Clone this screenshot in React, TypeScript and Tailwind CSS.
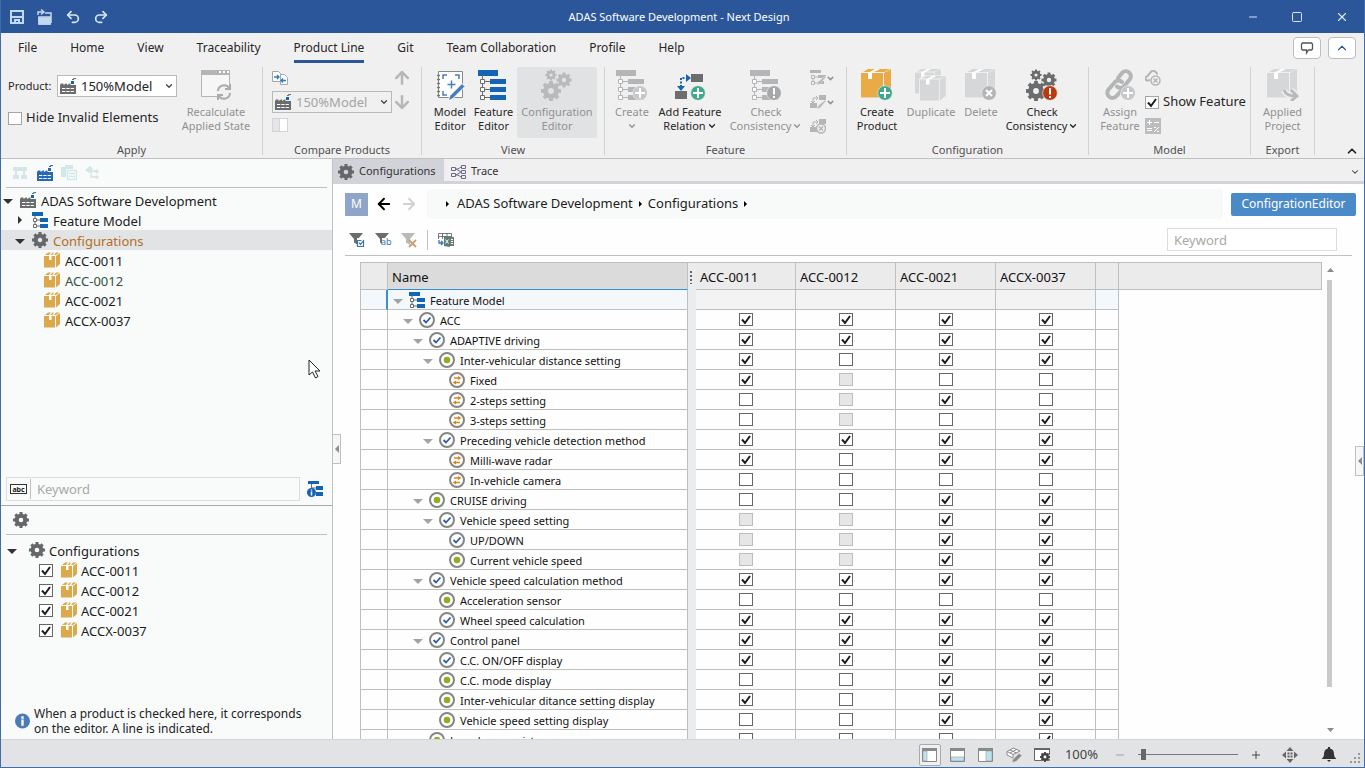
import type { ReactNode } from 'react';
import clsx from 'clsx';
import {
  ArrowDown, ArrowLeft, ArrowRight, ArrowUp, ChevronDown, ChevronUp, Minus, Plus, Redo2, Square, Undo2, X,
} from 'lucide-react';

const BLUE = '#1464b4';
const GRAY = '#b4b5b6';
const DARK = '#6b6c6e';

type State = 'on' | 'off' | 'na';
type Kind = 'model' | 'check' | 'dot' | 'swap';

/* ---------- icons ---------- */

function Factory({ color = DARK, flag = BLUE }: { color?: string; flag?: string }) {
  return (
    <svg width="16" height="16" viewBox="0 0 16 16" className="shrink-0">
      <path d="M0 16V7l1-1.500h2.500V7L6 5.500h1V7l2.500-1.500h1V7H16v9z" fill={color} />
      <path d="M2 10.500h12M2 13.500h12" stroke="#fff" strokeDasharray="3.300 1" />
      <path d="M11 3h3v3h-3z" fill={flag} />
      <path d="M12 1.500h1.500l.5-1h2" stroke={color} fill="none" strokeWidth="1.2" />
    </svg>
  );
}

function FeatureIcon() {
  return (
    <svg width="16" height="16" viewBox="0 0 16 16" className="shrink-0">
      <path d="M0 0h11v4H0zM8 6h8v4H8zM8 12h8v4H8z" fill={BLUE} />
      <path d="M3 4v9M3 8h5M3 14h5" stroke={DARK} />
      <path d="M1.500 6.500h3v3h-3zM1.500 12.500h3v3h-3z" fill="#fff" stroke={DARK} />
    </svg>
  );
}

function FeatureTree({ color = BLUE, line = DARK, children }: { color?: string; line?: string; children?: ReactNode }) {
  return (
    <svg width="32" height="32" viewBox="0 0 32 32">
      <path d="M0 1h20v6H0zM12 10h16v5H12zM12 18h16v5H12zM12 26h16v5H12z" fill={color} />
      <path d="M4.500 6v22M5 12.500h7M5 20.500h7M5 28.500h7" stroke={line} />
      <path d="M2.500 10.500h4v4h-4zM2.500 18.500h4v4h-4zM2.500 26.500h4v4h-4z" fill="#fff" stroke={line} />
      {children}
    </svg>
  );
}

// eight teeth round a ring, drawn about its own centre
function GearShape({ x, y, r, color }: { x: number; y: number; r: number; color: string }) {
  return (
    <g transform={`translate(${x} ${y})`}>
      <circle r={r * 0.54} fill="none" stroke={color} strokeWidth={r * 0.5} />
      {[0, 45, 90, 135, 180, 225, 270, 315].map((a) => (
        <rect key={a} x={-r * 0.19} y={-r} width={r * 0.38} height={r * 0.4} fill={color} transform={`rotate(${a})`} />
      ))}
    </g>
  );
}

function Gear() {
  return (
    <svg width="16" height="16" viewBox="0 0 16 16" className="shrink-0">
      <GearShape x={8} y={8} r={8} color="#66676a" />
    </svg>
  );
}

function Gears({ color, children }: { color: string; children?: ReactNode }) {
  return (
    <svg width="32" height="32" viewBox="0 0 32 32">
      <GearShape x={10} y={6} r={5.5} color={color} />
      <GearShape x={23} y={11} r={7.5} color={color} />
      <GearShape x={10} y={22} r={10} color={color} />
      {children}
    </svg>
  );
}

function BoxIcon() {
  return (
    <svg width="16" height="16" viewBox="0 0 16 16" className="shrink-0">
      <path d="M0 4h11v11.500H0zM12 4l4-3v11l-4 3.500zM1 3l3-2.500h3L5 3zM6.500 3l2-2.500H10L8.500 3zM10 3l2-2.500h3.500L12 3z" fill="#dba94c" />
      <path d="M5 4h2.500v4H5z" fill="#fff" />
    </svg>
  );
}

function BoxShape({ color }: { color: string }) {
  return (
    <>
      <path d="M0 4h22v24.500H0zM23 4l7-4v23l-7 5.500zM2 3l5-3h22l-5.500 3z" fill={color} />
      <path d="M7 4l7-4h5l-8 4v6H7z" fill="#fff" />
    </>
  );
}

function BigBox({ color, children }: { color: string; children?: ReactNode }) {
  return (
    <svg width="32" height="32" viewBox="0 0 32 32">
      <BoxShape color={color} />
      {children}
    </svg>
  );
}

function Badge({ x, y, color, kind }: { x: number; y: number; color: string; kind: 'plus' | 'x' | 'alert' }) {
  return (
    <g transform={`translate(${x} ${y})`}>
      <circle r="7.300" fill={color} stroke="#f0f0f0" strokeWidth=".600" />
      {kind === 'plus' && <path d="M-5 0H5M0-5V5" stroke="#fff" strokeWidth="2" />}
      {kind === 'x' && <path d="M-3-3L3 3M3-3L-3 3" stroke="#fff" strokeWidth="2" />}
      {kind === 'alert' && <path d="M0-5V1.500M0 3V5" stroke="#fff" strokeWidth="2" />}
    </g>
  );
}

function NodeIcon({ kind }: { kind: Kind }) {
  if (kind === 'model') return <FeatureIcon />;
  return (
    <svg width="16" height="16" viewBox="0 0 16 16" className="shrink-0">
      <circle cx="8" cy="8" r="7" fill="#fff" stroke="#858585" strokeWidth="2" />
      {kind === 'check' && <path d="M4.500 8l2.500 2.500 4.500-5" fill="none" stroke="#2f5ca8" strokeWidth="1.800" />}
      {kind === 'dot' && <circle cx="8" cy="8" r="3.300" fill="#8fae22" />}
      {kind === 'swap' && (
        <>
          <path d="M5 6h5M6 10.500h5" stroke="#d9861a" strokeWidth="1.400" />
          <path d="M9 4L12.500 6 9 8zM7 8.500L3.500 10.500 7 12.500z" fill="#d9861a" />
        </>
      )}
    </svg>
  );
}

function Caret({ open = true, color = '#333' }: { open?: boolean; color?: string }) {
  return (
    <svg width="10" height="10" viewBox="0 0 10 10" className="shrink-0">
      <path d={open ? 'M0 4h10L5 9z' : 'M3 1l4 4-4 4z'} fill={color} />
    </svg>
  );
}

function Funnel({ color = DARK, children }: { color?: string; children: ReactNode }) {
  return (
    <svg width="16" height="16" viewBox="0 0 16 16" className="overflow-visible">
      <path d="M0 1h14L9 7v6l-4-2.500V7z" fill={color} />
      {children}
    </svg>
  );
}

function Relation({ badge }: { badge: 'tree' | 'pen' | 'x' }) {
  return (
    <svg width="16" height="16" viewBox="0 0 16 16" className="shrink-0">
      {badge === 'tree' ? (
        <>
          <path d="M0 0h11v3H0zM8 5h8v3H8zM8 11h6v3H8z" fill={GRAY} />
          <path d="M1.500 5.500h3v3h-3zM1.500 11.500h3v3h-3zM3 8v4M5 7h3M5 13h3" fill="none" stroke={GRAY} />
        </>
      ) : (
        <>
          <path d="M9 1h7v5H9zM0 9h7v5H0z" fill={GRAY} />
          <path d="M3 9V4h5M1 7l2 2 2-2M6 2l2 2-2 2" fill="none" stroke={GRAY} />
        </>
      )}
      {badge === 'x' ? (
        <>
          <circle cx="11" cy="10.500" r="4.500" fill="#f0f0f0" stroke={GRAY} strokeWidth="1.500" />
          <path d="M9 8.500l4 4M13 8.500l-4 4" stroke={GRAY} strokeWidth="1.500" />
        </>
      ) : (
        <path d="M7 15l1-3 7-6 1 1-6 7z" fill={GRAY} stroke="#f0f0f0" strokeWidth=".500" />
      )}
    </svg>
  );
}

function LinkIcon() {
  return (
    <svg width="32" height="32" viewBox="0 0 32 32">
      <g fill="none" stroke={GRAY} strokeWidth="4" strokeLinecap="round">
        <path d="M14 9l4.500-5.500a5 5 0 0 1 7.500 6.500L20 17.500a5 5 0 0 1-7 0" />
        <path d="M17 22l-4.500 5a5 5 0 0 1-8-6.500l6.500-7.500a5 5 0 0 1 7 0" />
      </g>
      <Badge x={24} y={24} color="#c6c7c8" kind="plus" />
    </svg>
  );
}

/* ---------- controls ---------- */

function Check({ state, label, light }: { state: State; label: string; light?: boolean }) {
  return (
    <span className="inline-grid shrink-0">
      <input
        type="checkbox"
        aria-label={label}
        defaultChecked={state === 'on'}
        disabled={state === 'na'}
        className={clsx(
          'peer col-start-1 row-start-1 h-[13px] w-[14px] appearance-none border bg-white disabled:border-[#bdbdbd] disabled:bg-[#e6e6e6]',
          light ? 'border-[#a5a5a5]' : 'border-[#666]',
        )}
      />
      <svg viewBox="0 0 14 13" className="pointer-events-none invisible col-start-1 row-start-1 h-[13px] w-[14px] peer-checked:visible">
        <path d="M3 6.500l3 3.500 5-7" fill="none" stroke="#1c1c1c" strokeWidth="2" />
      </svg>
    </span>
  );
}

function ProductSelect({ disabled }: { disabled?: boolean }) {
  return (
    <span className="relative flex items-center">
      <span className="pointer-events-none absolute left-[3px]"><Factory /></span>
      <select
        id={disabled ? 'compare' : 'product'}
        aria-label="Product"
        disabled={disabled}
        className="h-[22px] w-[120px] appearance-none border border-[#b9babc] bg-white pl-[23px] text-[13px] leading-5 text-[#222] disabled:bg-[#f0f0f0] disabled:text-[#a4a4a4] disabled:opacity-100"
      >
        <option>150%Model</option>
      </select>
      <ChevronDown size={10} strokeWidth={3} className="pointer-events-none absolute right-[3px] text-[#444]" />
    </span>
  );
}

function BigButton({ icon, lines, width, disabled, active, menu }: {
  icon: ReactNode; lines: string[]; width: string; disabled?: boolean; active?: boolean; menu?: boolean;
}) {
  return (
    <button
      type="button"
      disabled={disabled}
      className={clsx(
        'flex h-[71px] shrink-0 flex-col items-center rounded-xs pt-0.5 text-[11px] leading-[14px] whitespace-nowrap text-[#262626] disabled:text-[#919191]',
        width,
        active && 'bg-[#e1e2e3]',
      )}
    >
      <span className="mb-1 h-8">{icon}</span>
      {lines.map((line, i) => (
        <span key={i} className="flex h-[14px] items-center gap-px">
          {line}
          {menu && i === lines.length - 1 && <ChevronDown size={10} strokeWidth={3} />}
        </span>
      ))}
    </button>
  );
}

function Group({ label, width, children }: { label: string; width: string; children: ReactNode }) {
  return (
    <section className={clsx('flex h-[88px] shrink-0 flex-col border-r border-[#d0d1d3]', width)}>
      <div className="flex">{children}</div>
      <h2 className="mt-auto text-center text-[11px] leading-[10px] text-[#505050]">{label}</h2>
    </section>
  );
}

/* ---------- ribbon ---------- */

const tabs = ['File', 'Home', 'View', 'Traceability', 'Product Line', 'Git', 'Team Collaboration', 'Profile', 'Help'];

function TitleBar() {
  return (
    <header className="flex h-[33px] shrink-0 items-center bg-[#2b579a] pt-px text-[#dbe7f5]">
      <div className="flex flex-1 items-center gap-3 pl-2">
        <button type="button" aria-label="Save">
          <svg width="16" height="16" viewBox="0 0 16 16" fill="none" stroke="#c3d9ef" strokeWidth="2">
            <path d="M2 2h12v12H2zM2 8h12M6 14v-3h4v3" />
          </svg>
        </button>
        <button type="button" aria-label="Open">
          <svg width="16" height="16" viewBox="0 0 16 16" fill="none" stroke="#c3d9ef" strokeWidth="1.500">
            <path d="M2 15V8h11v7zM8 4h6v10M1 6V3h5M4 .500L7 3 4 5.500" />
            <path d="M2 9h11v6H2z" fill="#c3d9ef" />
          </svg>
        </button>
        <button type="button" aria-label="Undo"><Undo2 size={16} strokeWidth={2.5} /></button>
        <button type="button" aria-label="Redo"><Redo2 size={16} strokeWidth={2.5} /></button>
      </div>
      <h1 className="text-[11px] text-white">ADAS Software Development - Next Design</h1>
      <div className="flex flex-1 items-center justify-end gap-8 pr-[15px]">
        <button type="button" aria-label="Minimize"><Minus size={12} strokeWidth={2} /></button>
        <button type="button" aria-label="Maximize"><Square size={12} strokeWidth={2} /></button>
        <button type="button" aria-label="Close"><X size={14} strokeWidth={2} /></button>
      </div>
    </header>
  );
}

function Tabs() {
  return (
    <nav className="flex h-[34px] shrink-0 items-start bg-[#f0f0f0] pl-[17px] text-xs text-[#262626]">
      <div className="flex gap-[33px]">
        {tabs.map((tab) => (
          <a
            key={tab}
            href="#"
            className={clsx('flex h-[30px] items-center border-b-[3px] pt-[3px]', tab === 'Product Line' ? 'border-[#2b579a]' : 'border-transparent')}
          >
            {tab}
          </a>
        ))}
      </div>
      <div className="ml-auto flex gap-[7px] pt-1 pr-2">
        <button type="button" aria-label="Feedback" className="grid h-[22px] w-7 place-items-center rounded-sm border border-[#bcbdbf] bg-white">
          <svg width="14" height="14" viewBox="0 0 14 14" fill="none" stroke="#555" strokeWidth="1.300">
            <path d="M2.500 2h9l1 1v5l-1 1H8.500l-2 3v-3h-4l-1-1V3z" />
          </svg>
        </button>
        <button type="button" aria-label="Collapse" className="grid h-[22px] w-7 place-items-center rounded-sm border border-[#bcbdbf] bg-white text-[#2b579a]">
          <ChevronUp size={14} />
        </button>
      </div>
    </nav>
  );
}

function Ribbon() {
  return (
    <div className="flex h-[92px] shrink-0 items-start overflow-hidden border-b border-[#bfc0c2] bg-[#f0f0f0]">
      <Group label="Apply" width="w-[262px]">
        <div className="flex flex-col gap-[10px] pt-2 pl-[7px]">
          <div className="flex items-center gap-1">
            <label htmlFor="product" className="w-[45px] text-[11px] text-[#262626]">Product:</label>
            <ProductSelect />
          </div>
          <label className="flex h-[22px] items-center gap-1 text-[13px] text-[#262626]">
            <Check state="off" label="Hide Invalid Elements" light />
            Hide Invalid Elements
          </label>
        </div>
        <BigButton
          width="w-[78px]"
          disabled
          lines={['Recalculate', 'Applied State']}
          icon={
            <svg width="32" height="32" viewBox="0 0 32 32">
              <path d="M1.500 2.500h28v25h-28z" fill="#f6f6f6" stroke={GRAY} />
              <path d="M1 1h29v5H1z" fill={GRAY} />
              <path d="M19 3h2M23 3h2M27 3h2" stroke="#fff" strokeWidth="2" />
              <circle cx="24" cy="23" r="8" fill="#f0f0f0" />
              <path d="M18 22a6 6 0 0 1 11-3M30 24a6 6 0 0 1-11 3M30 15v5h-5M18 31v-5h5" fill="none" stroke="#aaabac" strokeWidth="2" />
            </svg>
          }
        />
      </Group>

      <Group label="Compare Products" width="w-[159px]">
        <div className="flex flex-col gap-[5px] pt-[3px] pl-[9px]">
          <button type="button" aria-label="Compare" className="w-4">
            <svg width="16" height="16" viewBox="0 0 16 16" fill="#fff" stroke="#a5a6a8">
              <path d="M.500 1.500h6l2 2v8h-8z" />
              <path d="M8.500 4.500h4l3 3v7h-7z" />
              <path d="M2 7h5M5 5l2 2-2 2M14 10.500H9M11 8.500l-2 2 2 2" fill="none" stroke="#2b7cc3" strokeWidth="1.300" />
            </svg>
          </button>
          <ProductSelect disabled />
          <button type="button" disabled aria-label="Split view" className="flex h-[14px] w-4 border border-[#d3d4d6] bg-white">
            <span className="h-full w-[7px] border-r border-[#d3d4d6] bg-[#e4e5e6]" />
          </button>
        </div>
        <div className="flex flex-col items-center gap-1 pt-px text-[#b6b7b8]">
          <ArrowUp size={20} strokeWidth={3} />
          <ArrowDown size={20} strokeWidth={3} />
        </div>
      </Group>

      <Group label="View" width="w-[183px]">
        <div className="flex pl-2">
          <BigButton
            width="w-10"
            lines={['Model', 'Editor']}
            icon={
              <svg width="32" height="32" viewBox="0 0 32 32" fill="none">
                <path d="M4.500 2.500h24v26h-24z" fill="#fff" stroke="#888" />
                <path d="M3 6.500h3M3 10.500h3M3 14.500h3M3 18.500h3M3 22.500h3M3 26.500h3" stroke="#777" strokeWidth="1.500" />
                <path d="M9 10V6h4M21 6h4v4M9 22v4h4M17.500 11.500v8M13.500 15.500h8" stroke="#4a7eb8" strokeWidth="1.500" />
                <path d="M14 32l2-5.500L28 14.500l3 3L19 29.500z" fill="#4a7eb8" stroke="#fff" />
              </svg>
            }
          />
          <BigButton width="w-[47px]" lines={['Feature', 'Editor']} icon={<FeatureTree />} />
          <BigButton width="w-20" disabled active lines={['Configuration', 'Editor']} icon={<Gears color="#b9babb" />} />
        </div>
      </Group>

      <Group label="Feature" width="w-[242px]">
        <div className="flex pl-1">
          <BigButton width="w-[46px]" disabled menu lines={['Create', '']} icon={<FeatureTree color={GRAY} line={GRAY}><Badge x={24} y={24} color="#c6c7c8" kind="plus" /></FeatureTree>} />
          <BigButton
            width="w-[70px]"
            menu
            lines={['Add Feature', 'Relation']}
            icon={
              <svg width="32" height="32" viewBox="0 0 32 32">
                <path d="M17 5h12v8H17zM1 22h12v8H1z" fill="#6d6d6d" />
                <path d="M7 18V9h6" fill="none" stroke={BLUE} strokeWidth="2" strokeDasharray="2 1.500" />
                <path d="M3 17l4 5 4-5zM12 5l5 4-5 4z" fill={BLUE} />
                <Badge x={24} y={24} color="#3fa98c" kind="plus" />
              </svg>
            }
          />
          <BigButton width="w-[82px]" disabled menu lines={['Check', 'Consistency']} icon={<FeatureTree color={GRAY} line={GRAY}><Badge x={24} y={24} color="#a6a7a8" kind="alert" /></FeatureTree>} />
        </div>
        <div className="flex flex-col gap-2 pt-[3px] pl-[3px] text-[#929394]">
          <button type="button" disabled aria-label="Edit features" className="flex items-center"><Relation badge="tree" /><ChevronDown size={9} strokeWidth={4} /></button>
          <button type="button" disabled aria-label="Edit relation" className="flex items-center"><Relation badge="pen" /><ChevronDown size={9} strokeWidth={4} /></button>
          <button type="button" disabled aria-label="Delete relation"><Relation badge="x" /></button>
        </div>
      </Group>

      <Group label="Configuration" width="w-[242px]">
        <div className="flex pl-1">
          <BigButton width="w-[52px]" lines={['Create', 'Product']} icon={<BigBox color="#e8ab45"><Badge x={24} y={24} color="#3fa98c" kind="plus" /></BigBox>} />
          <BigButton
            width="w-14"
            disabled
            lines={['Duplicate']}
            icon={
              <svg width="32" height="32" viewBox="0 0 32 32">
                <g transform="scale(.86)"><BoxShape color="#d6d7d8" /></g>
                <g transform="translate(5 7) scale(.86)"><path d="M-1 3L6-1h25v25l-7 6H-1z" fill="#f0f0f0" /><BoxShape color="#d6d7d8" /></g>
              </svg>
            }
          />
          <BigButton width="w-11" disabled lines={['Delete']} icon={<BigBox color="#d6d7d8"><Badge x={24} y={24} color="#b4b5b6" kind="x" /></BigBox>} />
          <BigButton width="w-[78px]" menu lines={['Check', 'Consistency']} icon={<Gears color="#6b6c6e"><Badge x={24} y={24} color="#b93a0e" kind="alert" /></Gears>} />
        </div>
      </Group>

      <Group label="Model" width="w-[162px]">
        <div className="flex pl-2">
          <BigButton width="w-[46px]" disabled lines={['Assign', 'Feature']} icon={<LinkIcon />} />
        </div>
        <div className="flex flex-col gap-2 pt-[3px] pl-0.5">
          <button type="button" disabled aria-label="Unassign" className="w-4">
            <svg width="16" height="16" viewBox="0 0 16 16" fill="none" stroke={GRAY} strokeWidth="2">
              <path d="M5 10l-2 .500a2 2 0 0 1-1-4L6 2a2.500 2.500 0 0 1 4-.500 3 3 0 0 1 2 3" />
              <circle cx="10.500" cy="10.500" r="4.500" strokeWidth="1.500" />
              <path d="M8.500 8.500l4 4M12.500 8.500l-4 4" strokeWidth="1.500" />
            </svg>
          </button>
          <label className="flex h-4 items-center gap-1 text-[13px] text-[#262626]">
            <Check state="on" label="Show Feature" light />
            Show Feature
          </label>
          <button type="button" disabled aria-label="Formula" className="w-4">
            <svg width="16" height="16" viewBox="0 0 16 16">
              <path d="M0 0h16v16H0z" fill="#bcbdbe" />
              <path d="M2 4.500h5M4.500 2v5M9 4.500h5M2 10.500h5M2 12.500h5M9 14l5-5M9 9.500h2M12 13.500h2" stroke="#fff" />
            </svg>
          </button>
        </div>
      </Group>

      <Group label="Export" width="w-16">
        <BigButton
          width="w-full"
          disabled
          lines={['Applied', 'Project']}
          icon={
            <BigBox color="#d6d7d8">
              <path d="M17 21c2 5 6 6 9 6M24 21l6 6-6 5" fill="none" stroke="#f0f0f0" strokeWidth="6" />
              <path d="M17 21c2 5 6 6 11 6M24 21l6 6-6 5" fill="none" stroke="#b9babb" strokeWidth="3" />
            </BigBox>
          }
        />
      </Group>
      <button type="button" aria-label="Collapse ribbon" className="mr-[5px] ml-auto self-end text-[#222]">
        <ChevronUp size={14} strokeWidth={3} />
      </button>
    </div>
  );
}

/* ---------- left side ---------- */

const products = ['ACC-0011', 'ACC-0012', 'ACC-0021', 'ACCX-0037'];

function TreeRow({ level, open, icon, label, selected, tone }: {
  level: 0 | 1 | 2; open?: boolean; icon: ReactNode; label: string; selected?: boolean; tone?: string;
}) {
  return (
    <li className={clsx('flex h-5 items-center', ['pl-0.5', 'pl-[14px]', 'pl-[26px]'][level], selected && 'bg-[#e2e3e5]', tone)}>
      <span className="flex w-[17px]">{open !== undefined && <Caret open={open} />}</span>
      {icon}
      <span className="pt-0.5 pl-[5px] leading-[18px]">{label}</span>
    </li>
  );
}

function SidePanel() {
  return (
    <aside className="relative flex w-[332px] shrink-0 flex-col border-r border-[#bfc0c2] bg-[#f9fbfb] text-[13px] text-[#1c1c1c]">
      <div className="mr-[5px] ml-[5px] flex h-[29px] items-center gap-2 border-b border-[#bfc0c2] pl-[7px]">
        <svg width="16" height="16" viewBox="0 0 16 16"><path d="M0 2h14v4H0zM0 10h6v4H0zM8 10h6v4H8zM2 6h2v4H2zM10 6h2v4h-2z" fill="#d3e6e8" /></svg>
        <Factory color="#2868b4" flag="#2868b4" />
        <svg width="16" height="16" viewBox="0 0 16 16"><path d="M0 2h4V0h8v4H5v8H0z" fill="#d3e6e8" /><path d="M6.500 5.500h9v9h-9zM8 8.500h6M8 11.500h6" fill="#f9fbfb" stroke="#d3e6e8" strokeWidth="1.500" /></svg>
        <svg width="16" height="16" viewBox="0 0 16 16"><path d="M0 5l5-4 3 3-4 4zM9 6l3-2 2 2-2 3zM9 12l3-2 2 2-2 2z" fill="#d3e6e8" /><path d="M6 5v7h4M6 6h5" fill="none" stroke="#d3e6e8" strokeWidth="1.500" /></svg>
      </div>
      <ul className="pt-0.5">
        <TreeRow level={0} open icon={<Factory />} label="ADAS Software Development" />
        <TreeRow level={1} open={false} icon={<FeatureIcon />} label="Feature Model" />
        <TreeRow level={1} open icon={<Gear />} label="Configurations" selected tone="text-[#b3701f]" />
        {products.map((name) => (
          <TreeRow key={name} level={2} icon={<BoxIcon />} label={name} tone={name === 'ACC-0012' ? 'text-[#33503f]' : undefined} />
        ))}
      </ul>

      <div className="mt-auto flex items-center gap-[7px] pb-1 pl-[5px]">
        <div className="flex h-6 w-[294px] items-center border border-[#dcdddf]">
          <button type="button" aria-label="Match mode" className="flex h-5 w-6 items-center justify-center border-r border-[#bfc0c2]">
            <span className="flex h-[10px] items-center border border-[#333] px-px text-[7px] leading-none font-bold">abc</span>
          </button>
          <input type="text" aria-label="Search tree" placeholder="Keyword" className="min-w-0 flex-1 bg-transparent px-1.5 pt-0.5 text-[13px] outline-none placeholder:text-[#a9a9a5]" />
        </div>
        <svg width="16" height="16" viewBox="0 0 16 16">
          <path d="M1 0h11v3H1zM9 5h7v4H9zM9 11h7v4H9z" fill={BLUE} />
          <path d="M4.500 3v4M5 7h4" stroke={DARK} />
          <circle cx="4.500" cy="11.500" r="4.500" fill={BLUE} />
          <path d="M4.500 8.500v1M4.500 10.500v4" stroke="#fff" strokeWidth="1.500" />
        </svg>
      </div>

      <section className="flex h-[234px] shrink-0 flex-col border-t border-[#a9aaac]">
        <div className="mx-[5px] flex h-[29px] items-center border-b border-[#bfc0c2] pl-[7px]"><Gear /></div>
        <ul className="pt-[5px]">
          <li className="flex h-5 items-center pl-[6px]">
            <Caret />
            <span className="pl-3"><Gear /></span>
            <span className="pt-0.5 pl-1 leading-[18px]">Configurations</span>
          </li>
          {products.map((name) => (
            <li key={name} className="flex h-5 items-center pl-[38px]">
              <Check state="on" label={name} />
              <span className="pl-2"><BoxIcon /></span>
              <span className="pt-0.5 pl-1 leading-[18px]">{name}</span>
            </li>
          ))}
        </ul>
        <p className="mt-auto flex items-center gap-1 pb-[3px] pl-[14px] text-xs leading-[15px] text-[#222]">
          <svg width="15" height="16" viewBox="0 0 16 16" className="shrink-0">
            <circle cx="8" cy="8" r="8" fill="#4a7db8" />
            <path d="M8 3v2.500M8 6.500V13" stroke="#fff" strokeWidth="2.500" />
          </svg>
          <span>When a product is checked here, it corresponds<br />on the editor. A line is indicated.</span>
        </p>
      </section>

      <button type="button" aria-label="Collapse panel" className="absolute top-[275px] -right-[9px] z-10 grid h-[30px] w-[9px] place-items-center border border-[#bfc0c2] bg-[#f5f6f6]">
        <svg width="4" height="8" viewBox="0 0 4 8"><path d="M4 0v8L0 4z" fill="#8b8c90" /></svg>
      </button>
      <svg width="13" height="20" viewBox="0 0 13 20" className="absolute top-[200px] left-[307px]">
        <path d="M1 1v15l3.500-3 3 6 2.500-1.500-3-5.500H12z" fill="#fff" stroke="#222" />
      </svg>
    </aside>
  );
}

/* ---------- editor ---------- */

// one letter per product column: x = checked, o = unchecked, - = not applicable
const rows: { name: string; level: number; kind: Kind; leaf?: boolean; cells: string }[] = [
  { name: 'Feature Model', level: 0, kind: 'model', cells: '' },
  { name: 'ACC', level: 1, kind: 'check', cells: 'xxxx' },
  { name: 'ADAPTIVE driving', level: 2, kind: 'check', cells: 'xxxx' },
  { name: 'Inter-vehicular distance setting', level: 3, kind: 'dot', cells: 'xoxx' },
  { name: 'Fixed', level: 4, kind: 'swap', leaf: true, cells: 'x-oo' },
  { name: '2-steps setting', level: 4, kind: 'swap', leaf: true, cells: 'o-xo' },
  { name: '3-steps setting', level: 4, kind: 'swap', leaf: true, cells: 'o-ox' },
  { name: 'Preceding vehicle detection method', level: 3, kind: 'check', cells: 'xxxx' },
  { name: 'Milli-wave radar', level: 4, kind: 'swap', leaf: true, cells: 'xoxx' },
  { name: 'In-vehicle camera', level: 4, kind: 'swap', leaf: true, cells: 'oooo' },
  { name: 'CRUISE driving', level: 2, kind: 'dot', cells: 'ooxx' },
  { name: 'Vehicle speed setting', level: 3, kind: 'check', cells: '--xx' },
  { name: 'UP/DOWN', level: 4, kind: 'check', leaf: true, cells: '--xx' },
  { name: 'Current vehicle speed', level: 4, kind: 'dot', leaf: true, cells: '--xx' },
  { name: 'Vehicle speed calculation method', level: 2, kind: 'check', cells: 'xxxx' },
  { name: 'Acceleration sensor', level: 3, kind: 'dot', leaf: true, cells: 'oooo' },
  { name: 'Wheel speed calculation', level: 3, kind: 'check', leaf: true, cells: 'xxxx' },
  { name: 'Control panel', level: 2, kind: 'check', cells: 'xxxx' },
  { name: 'C.C. ON/OFF display', level: 3, kind: 'check', leaf: true, cells: 'xxxx' },
  { name: 'C.C. mode display', level: 3, kind: 'dot', leaf: true, cells: 'ooxx' },
  { name: 'Inter-vehicular ditance setting display', level: 3, kind: 'dot', leaf: true, cells: 'xoxx' },
  { name: 'Vehicle speed setting display', level: 3, kind: 'dot', leaf: true, cells: 'ooxx' },
  { name: 'Lane keep assist', level: 2, kind: 'dot', leaf: true, cells: 'ooox' },
];

const indent = ['pl-[5px]', 'pl-[15px]', 'pl-[25px]', 'pl-[35px]', 'pl-[45px]'];
const states: Record<string, State> = { x: 'on', o: 'off', '-': 'na' };

function FeatureTable() {
  const th = 'h-7 border-t border-r border-b border-[#bfbfbf] bg-[#ebebeb] pt-[3px] pb-0 pl-1 text-left font-normal';
  const td = 'h-5 border-r border-b border-[#bfbfbf] p-0';
  return (
    <table className="w-full table-fixed border-separate border-spacing-0 text-[#111]">
      <colgroup>
        <col className="w-7" />
        <col className="w-[300px]" />
        <col className="w-2" />
        {products.map((p) => <col key={p} className="w-[100px]" />)}
        <col className="w-[23px]" />
        <col />
      </colgroup>
      <thead className="text-[13px]">
        <tr>
          <th className={clsx(th, 'border-l')} />
          <th className="h-7 border-t border-r border-b border-[#bfbfbf] border-b-[#3a8fd3] bg-[#dbdbdb] pt-[3px] pb-0 pl-1 text-left font-normal">Name</th>
          <th className="border-t border-[#bfbfbf] bg-[#ebecee] p-0">
            <svg width="8" height="16" viewBox="0 0 8 16"><path d="M3 2v13" stroke="#666" strokeWidth="2" strokeDasharray="2 2" /></svg>
          </th>
          {products.map((p) => <th key={p} className={th}>{p}</th>)}
          <th className={th} />
          <th className={th} />
        </tr>
      </thead>
      <tbody className="text-[11px]">
        {rows.map((row) => {
          const root = row.level === 0;
          return (
            <tr key={row.name}>
              <td className={clsx(td, 'border-l', root && 'border-r-2 border-r-[#3a8fd3] bg-[#f3f8fc]')} />
              <td className={clsx(td, root && 'bg-[#f3f8fc]')}>
                <div className={clsx('flex h-[19px] items-center pt-px whitespace-nowrap', indent[row.level])}>
                  <span className="flex w-4">{!row.leaf && <Caret color="#a3a3a3" />}</span>
                  <NodeIcon kind={row.kind} />
                  <span className="pt-px pl-[5px] leading-4">{row.name}</span>
                </div>
              </td>
              <td className="bg-[#ebecee] p-0" />
              {products.map((p, i) => (
                <td key={p} className={clsx(td, root && 'bg-[#f3f3f3]')}>
                  {!root && (
                    <div className="flex h-[19px] items-center justify-center pl-px">
                      <Check state={states[row.cells[i]]} label={`${row.name} ${p}`} />
                    </div>
                  )}
                </td>
              ))}
              <td className={clsx(td, root && 'bg-[#f3f8fc]')} />
            </tr>
          );
        })}
      </tbody>
    </table>
  );
}

function Editor() {
  return (
    <main className="relative flex min-w-0 flex-1 flex-col bg-[#fefefe]">
      <div className="flex h-[25px] shrink-0 items-stretch border-b-[3px] border-[#d2d3d8] bg-[#f0f0f0] text-[11px] text-[#333]">
        <button type="button" className="flex w-[111px] items-center gap-[5px] bg-[#d2d3d8] pt-[3px] pl-[5px]"><Gear />Configurations</button>
        <button type="button" className="flex items-center gap-1 pt-[3px] pl-[7px]">
          <svg width="16" height="16" viewBox="0 0 16 16" fill="none" stroke="#6d6a88">
            <path d="M.500 3.500h4v3h-4zM.500 9.500h4v3h-4zM10.500 1.500h4v3h-4zM10.500 6.500h4v3h-4zM10.500 11.500h4v3h-4zM5 5h2l3-2M5 5l5 3M5 11l5-3M5 11h2l3 2" />
          </svg>
          Trace
        </button>
        <ChevronDown size={10} strokeWidth={2.5} className="mt-2 mr-1 ml-auto" />
      </div>

      <div className="flex h-10 shrink-0 items-center pr-2 pl-3">
        <span className="grid h-[23px] w-[23px] place-items-center bg-[#8ea4c8] text-xs text-white">M</span>
        <ArrowLeft size={18} strokeWidth={2.5} className="ml-[7px] text-black" />
        <ArrowRight size={18} strokeWidth={2.5} className="ml-[7px] text-[#d0d1d3]" />
        <nav className="ml-[9px] flex h-[30px] flex-1 items-center gap-[5px] rounded-sm bg-[#f8fafa] pl-[18px] text-[13px] text-[#1c1c1c]">
          <svg width="5" height="6" viewBox="0 0 5 6"><path d="M1 0v6l3-3z" /></svg>
          <a href="#" className="pl-0.5">ADAS Software Development</a>
          <svg width="5" height="6" viewBox="0 0 5 6"><path d="M1 0v6l3-3z" /></svg>
          <a href="#">Configurations</a>
          <svg width="5" height="6" viewBox="0 0 5 6"><path d="M1 0v6l3-3z" /></svg>
        </nav>
        <button type="button" className="ml-2 h-[23px] w-[125px] rounded-xs bg-[#4a8ac9] text-xs text-white">ConfigrationEditor</button>
      </div>

      <div className="mr-3 ml-3 flex h-8 shrink-0 items-center gap-[10px] border-b border-[#bfc0c2] pr-[15px] pl-1">
        <button type="button" aria-label="Filter by check">
          <Funnel><path d="M8 6h8v9H8z" fill="#fff" /><path d="M14.500 9v5.500h-6v-6h4M10 10.500l1.500 2L15 8" fill="none" stroke="#3b74b4" strokeWidth="1.200" /></Funnel>
        </button>
        <button type="button" aria-label="Filter by name">
          <Funnel><path d="M7 6h9v9H7z" fill="#fff" /><text x="6" y="13" fontSize="9" fill="#3b74b4">ab</text></Funnel>
        </button>
        <button type="button" aria-label="Clear filter" disabled>
          <Funnel color="#b9babb"><path d="M8 8l7 7M15 8l-7 7" stroke="#c9a273" strokeWidth="1.800" /></Funnel>
        </button>
        <span className="h-5 border-l border-[#bfc0c2]" />
        <button type="button" aria-label="Export to Excel">
          <svg width="16" height="16" viewBox="0 0 16 16">
            <path d="M.500 7V1.500h13V5M.500 4.500h13M4.500 1v6M9 1v4" fill="none" stroke="#777" />
            <path d="M6 5l6-1v11l-6-1z" fill="#5d7d76" />
            <path d="M12 5h4v9h-4z" fill="#777" />
            <path d="M7.500 7.500l3 4M10.500 7.500l-3 4M13 7.500h2M13 9.500h2M13 11.500h2" stroke="#fff" />
            <path d="M1 8v3h3M3 9l2 2-2 2" fill="none" stroke="#3b74b4" strokeWidth="1.300" />
          </svg>
        </button>
        <input type="text" aria-label="Filter features" placeholder="Keyword" className="ml-auto h-[23px] w-[170px] border border-[#dcdddf] bg-white px-1.5 text-[13px] outline-none placeholder:text-[#a9a9a5]" />
      </div>

      <div className="flex min-h-0 flex-1 overflow-hidden pt-1.5 pl-[27px]">
        <div className="min-w-0 flex-1 overflow-hidden"><FeatureTable /></div>
        <div className="mr-[29px] flex w-[13px] flex-col items-center pt-1 pb-1">
          <svg width="7" height="10" viewBox="0 0 7 10" className="ml-[3px]"><path d="M0 6l3.500-4L7 6z" fill="#8b8b8b" /></svg>
          <span className="my-1 ml-[2px] w-[5px] grow-[410] bg-[#c9c9c9]" />
          <span className="grow-[34]" />
          <svg width="7" height="10" viewBox="0 0 7 10" className="ml-[3px]"><path d="M0 3l3.500 4L7 3z" fill="#8b8b8b" /></svg>
        </div>
      </div>

      <button type="button" aria-label="Open inspector" className="absolute top-[287px] right-0 grid h-[30px] w-[9px] place-items-center border border-[#bfc0c2] bg-[#f5f6f6]">
        <svg width="4" height="8" viewBox="0 0 4 8"><path d="M4 0v8L0 4z" fill="#8b8c90" /></svg>
      </button>
    </main>
  );
}

function Layout({ d }: { d: string }) {
  return (
    <svg width="15" height="14" viewBox="0 0 15 14">
      <path d="M.500.500h14v13H.500z" fill="#fff" stroke="#88898b" />
      <path d={d} fill="#bfe3ee" stroke="#88898b" strokeWidth=".500" />
      <path d="M0 0h15v3H0z" fill="#88898b" />
    </svg>
  );
}

function StatusBar() {
  return (
    <footer className="flex h-7 shrink-0 items-center justify-end border-t border-[#d5d6d8] bg-[#e2e3e5] pt-0.5 pr-1 text-[#444]">
      <div className="flex items-center gap-[7px]">
        <button type="button" aria-label="Left layout" className="grid h-[22px] w-[22px] place-items-center rounded-xs border border-[#a9aaac] bg-[#f0f0f0]"><Layout d="M1 3h4v10H1z" /></button>
        <button type="button" aria-label="Bottom layout" className="grid w-[20px] place-items-center"><Layout d="M1 9h13v4H1z" /></button>
        <button type="button" aria-label="Right layout" className="grid w-[21px] place-items-center"><Layout d="M8 3h6v10H8z" /></button>
        <button type="button" aria-label="Model view" className="grid w-[22px] place-items-center">
          <svg width="16" height="16" viewBox="0 0 16 16" stroke="#8a8b8d" fill="#fff">
            <path d="M1 4.500L7.500 1 14 4 7 7.500zM1 4.500v3.500L7 11V7.500M4 3l6.500 3M10.500 2.500L4 6" />
            <path d="M6 15.500l1-3 6-6 3 2-6 6z" fill="#888" stroke="#e2e3e5" strokeWidth=".500" />
          </svg>
        </button>
        <button type="button" aria-label="View settings" className="grid w-[20px] place-items-center">
          <svg width="16" height="14" viewBox="0 0 16 14">
            <path d="M.500.500h15v12H.500z" fill="#fff" stroke="#666" /><path d="M0 0h16v2H0z" fill="#666" />
            <circle cx="11" cy="9" r="5" fill="#fff" />
            <GearShape x={11} y={9} r={5} color="#444" />
          </svg>
        </button>
      </div>
      <span className="pl-[13px] text-[13px]">100%</span>
      <Minus size={12} strokeWidth={1.5} className="ml-4 text-[#8b8c90]" />
      <input
        type="range"
        aria-label="Zoom"
        defaultValue={3}
        className="mx-3 h-3 w-[100px] appearance-none bg-[linear-gradient(#77787a,#77787a)] bg-[length:100%_1px] bg-center bg-no-repeat [&::-webkit-slider-thumb]:h-[11px] [&::-webkit-slider-thumb]:w-[5px] [&::-webkit-slider-thumb]:appearance-none [&::-webkit-slider-thumb]:bg-[#666769]"
      />
      <Plus size={12} strokeWidth={2} />
      <svg width="16" height="16" viewBox="0 0 16 16" className="ml-5" fill="#666">
        <path d="M8 0l3.500 4h-7zM8 16l3.500-4h-7zM0 8l4-3.500v7zM16 8l-4-3.500v7zM5.500 5.500h2v2h-2zM8.500 5.500h2v2h-2zM5.500 8.500h2v2h-2zM8.500 8.500h2v2h-2z" />
      </svg>
      <svg width="14" height="15" viewBox="0 0 14 15" className="ml-6" fill="#333">
        <path d="M6 0h2v1.500c3 .500 4 3 4 5.500 0 2 .500 3 2 4.500v.500H0v-.500C1.500 10 2 9 2 7c0-2.500 1-5 4-5.500zM5 13h4l-2 2z" />
      </svg>
      <svg width="10" height="10" viewBox="0 0 10 10" className="mb-1 ml-[14px] self-end" fill="#98999d">
        <path d="M8 0h2v2H8zM4 4h2v2H4zM8 4h2v2H8zM0 8h2v2H0zM4 8h2v2H4zM8 8h2v2H8z" />
      </svg>
    </footer>
  );
}

export default function App() {
  return (
    <div className="flex h-screen flex-col overflow-hidden border-x border-b border-[#3f6eb0] bg-white font-['Noto_Sans',sans-serif]">
      <TitleBar />
      <Tabs />
      <Ribbon />
      <div className="flex min-h-0 flex-1">
        <SidePanel />
        <Editor />
      </div>
      <StatusBar />
    </div>
  );
}
